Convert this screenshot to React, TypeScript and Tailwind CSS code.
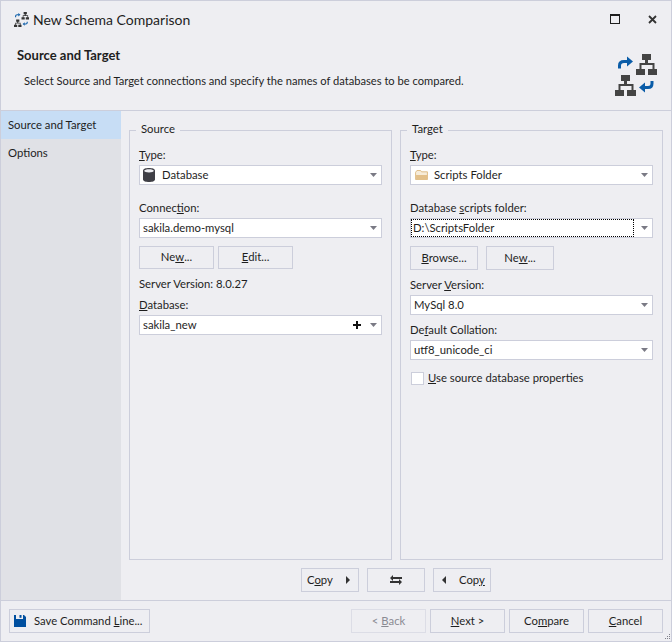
import type { ReactNode } from "react";

const SchemaIcon = ({ className, dark = "#444444", blue = "#0a5ca8" }: { className: string; dark?: string; blue?: string }) => (
  <svg viewBox="0 0 42 42" className={className}>
    <g fill={dark}>
      <path d="M27 0h9v6h-3v3h6.500v6H42v6h-9v-6h4.500v-4h-11v4H30v6h-9v-6h3.500V9H30V6h-3z" />
      <path d="M6 21h9v6h-3v3h6.500v6H21v6h-9v-6h4.500v-4h-11v4H9v6H0v-6h3.500v-6H9v-3H6z" />
    </g>
    <path d="M4.500 14.500V11.500Q4.500 7.500 9 7.500H13" fill="none" stroke={blue} strokeWidth="3" />
    <path d="M12 2.500L18 7.500L12 12.500z" fill={blue} />
    <path d="M37 27V29.500Q37 33.500 33 33.500H29" fill="none" stroke={blue} strokeWidth="3" />
    <path d="M30 28.500L24 33.500L30 38.500z" fill={blue} />
  </svg>
);

const Caret = () => (
  <svg viewBox="0 0 7 4" className="h-1 w-[7px] shrink-0">
    <path d="M0 0h7L3.500 4z" fill="#7a7a85" />
  </svg>
);

const DatabaseIcon = () => (
  <svg viewBox="0 0 12 14" className="h-[14px] w-3 shrink-0">
    <path d="M0 2.500C0 .8 3 0 6 0s6 .8 6 2.500v9C12 13.200 9 14 6 14s-6-.8-6-2.500z" fill="#3f3f46" />
    <path d="M1.200 2.800C1.200 1.800 3.500 1.200 6 1.200s4.800.6 4.800 1.600S8.500 4.400 6 4.400 1.200 3.800 1.200 2.800z" fill="#eeeef2" />
  </svg>
);

const FolderIcon = () => (
  <svg viewBox="0 0 14 11" className="-mr-[1px] ml-[1px] h-[10px] w-[13px] shrink-0">
    <path d="M.5 10.500V2.500L2 .5h4l1 1.500h6.500v8.500z" fill="#f7ecd9" stroke="#dcb77e" />
    <path d="M1 5.500h12.500v5H1z" fill="#e3c08a" />
  </svg>
);

const Label = ({ children, className = "" }: { children: ReactNode; className?: string }) => (
  <div className={`h-4 leading-4 ${className}`}>{children}</div>
);

const Combo = ({ children, extra, className = "" }: { children: ReactNode; extra?: ReactNode; className?: string }) => (
  <div className={`mt-[2px] flex h-5 items-center border border-[#cccedb] bg-white pr-[4px] ${className}`}>
    <div className="flex min-w-0 flex-1 items-center gap-[7px] pl-[3px]">{children}</div>
    {extra}
    <Caret />
  </div>
);

const Button = ({
  children,
  className = "",
}: {
  children: ReactNode;
  className?: string;
}) => (
  <button className={`flex items-center justify-center whitespace-nowrap border border-[#cccedb] bg-[#eeeef2] text-[#1e1e1e] ${className}`}>
    {children}
  </button>
);

export default function App() {
  return (
    <div className="flex h-[642px] w-[672px] flex-col border border-[#cccedb] bg-[#eeeef2] font-['Lato','Noto_Sans',sans-serif] text-[11.3px] text-[#1e1e1e]">
      <div className="flex h-[110px] shrink-0 border-b border-[#cccedb]">
        <div className="flex min-w-0 flex-1 flex-col">
          <div className="flex h-[38px] shrink-0 items-center gap-[4px] pb-[1px] pl-[13px]">
            <SchemaIcon className="h-[15px] w-[15px]" dark="#333333" />
            <span className="text-[14px] leading-5">New Schema Comparison</span>
          </div>
          <div className="mt-2 h-4 pl-4 text-[13px] font-bold leading-4">Source and Target</div>
          <div className="mt-[10px] h-4 pl-[23px] text-[11.15px] leading-4">
            Select Source and Target connections and specify the names of databases to be compared.
          </div>
        </div>
        <div className="flex w-[56px] shrink-0 flex-col items-start">
          <div className="-ml-[5px] flex h-[38px] w-[47px] items-center justify-between pb-[2px]">
            <div className="h-[10px] w-[10px] border border-t-2 border-[#1e1e1e]" />
            <svg viewBox="0 0 9 9" className="h-[9px] w-[9px]">
              <path d="M1 1L8 8M8 1L1 8" stroke="#333333" strokeWidth="1.800" />
            </svg>
          </div>
          <SchemaIcon className="mt-[15px] h-[42px] w-[42px]" />
        </div>
      </div>

      <div className="flex min-h-0 flex-1">
        <div className="w-[120px] shrink-0 bg-[#e0e1e6]">
          <div className="flex h-7 items-center bg-[#c7ddf5] pl-[7px]">Source and Target</div>
          <div className="flex h-7 items-center pl-[7px]">Options</div>
        </div>

        <div className="flex min-w-0 flex-1 flex-col px-2 pt-[11px]">
          <div className="flex min-h-0 flex-1 gap-2">
            <fieldset className="min-w-0 flex-1 border border-[#cccedb] px-[9px] pb-2">
              <legend className="-ml-[3px] h-4 px-[5px] leading-[14px]">Source</legend>
              <Label className="mt-[9px]"><u>T</u>ype:</Label>
              <Combo>
                <DatabaseIcon />
                <span>Database</span>
              </Combo>
              <Label className="mt-[15px]">Connec<u>t</u>ion:</Label>
              <Combo>sakila.demo-mysql</Combo>
              <div className="mt-2 flex gap-1">
                <Button className="h-[23px] w-[75px]">Ne<u>w</u>...</Button>
                <Button className="h-[23px] w-[75px]"><u>E</u>dit...</Button>
              </div>
              <Label className="mt-[7px]">Server Version: 8.0.27</Label>
              <Label className="mt-[5px]"><u>D</u>atabase:</Label>
              <Combo
                extra={
                  <svg viewBox="0 0 8 8" className="mr-[9px] h-2 w-2 shrink-0">
                    <path d="M3 0h2v3h3v2H5v3H3V5H0V3h3z" fill="#111111" />
                  </svg>
                }
              >
                sakila_new
              </Combo>
            </fieldset>

            <fieldset className="min-w-0 flex-1 border border-[#cccedb] px-[9px] pb-2">
              <legend className="-ml-[3px] h-4 px-[5px] leading-[14px]">Target</legend>
              <Label className="mt-[9px]"><u>T</u>ype:</Label>
              <Combo>
                <FolderIcon />
                <span>Scripts Folder</span>
              </Combo>
              <Label className="mt-[15px]">Database <u>s</u>cripts folder:</Label>
              <div className="mt-[2px] flex h-5 items-center border border-[#cccedb] bg-white pr-[4px]">
                <div className="mr-[7px] flex h-full flex-1 items-center border border-dotted border-black pl-[1px]">
                  D:\ScriptsFolder
                </div>
                <Caret />
              </div>
              <div className="mt-2 flex gap-2">
                <Button className="h-6 w-[68px]"><u>B</u>rowse...</Button>
                <Button className="h-6 w-[68px]">Ne<u>w</u>...</Button>
              </div>
              <Label className="mt-[7px]">Server <u>V</u>ersion:</Label>
              <Combo>MySql 8.0</Combo>
              <Label className="mt-[7px]">De<u>f</u>ault Collation:</Label>
              <Combo>utf8_unicode_ci</Combo>
              <div className="mt-[10px] flex h-4 items-center pl-[1px]">
                <div className="h-[13px] w-[13px] border border-[#cccedb] bg-white" />
                <span className="ml-[4px]"><u>U</u>se source database properties</span>
              </div>
            </fieldset>
          </div>

          <div className="flex h-[40px] shrink-0 items-center justify-center gap-2">
            <Button className="h-6 w-[58px] justify-start pl-[5px] pr-2">
              <span>C<u>o</u>py</span>
              <svg viewBox="0 0 4 8" className="ml-auto h-2 w-1"><path d="M0 0l4 4-4 4z" fill="#333333" /></svg>
            </Button>
            <Button className="h-6 w-[58px]">
              <svg viewBox="0 0 12 10" className="h-[10px] w-3">
                <path d="M0 3l3-3v2h9v2H3v2zM12 7L9 10V8H0V6h9V4z" fill="#333333" />
              </svg>
            </Button>
            <Button className="h-6 w-[58px] justify-start gap-[13px] pl-2">
              <svg viewBox="0 0 4 8" className="h-2 w-1"><path d="M4 0L0 4l4 4z" fill="#333333" /></svg>
              <span>Cop<u>y</u></span>
            </Button>
          </div>
        </div>
      </div>

      <div className="relative flex h-[41px] shrink-0 items-center justify-between border-t border-[#cccedb] pl-2 pr-2">
        <Button className="h-6 w-[141px] justify-start gap-2 pl-1">
          <svg viewBox="0 0 12 12" className="h-3 w-3 shrink-0">
            <path d="M0 0h2v4h7V0h1l2 2v10H0z" fill="#004f9f" />
            <path d="M5.500 0h2v2.800h-2z" fill="#004f9f" />
          </svg>
          <span>Save Command <u>L</u>ine...</span>
        </Button>
        <div className="flex gap-1">
          <Button className="h-6 w-[75px] border-[#dcdde6] text-[#8a8a92]">&lt; <u className="ml-[3px]">B</u>ack</Button>
          <Button className="h-6 w-[75px] border-[#007acc]"><u>N</u>ext &gt;</Button>
          <Button className="h-6 w-[75px]">Co<u>m</u>pare</Button>
          <Button className="h-6 w-[75px]"><u>C</u>ancel</Button>
        </div>
        <svg viewBox="0 0 7 7" className="absolute bottom-0 right-0 h-[7px] w-[7px]">
          <path d="M5 0h1v1H5zM3 2h1v1H3zM5 2h1v1H5zM1 4h1v1H1zM3 4h1v1H3zM5 4h1v1H5z" fill="#80808a" />
        </svg>
      </div>
    </div>
  );
}
